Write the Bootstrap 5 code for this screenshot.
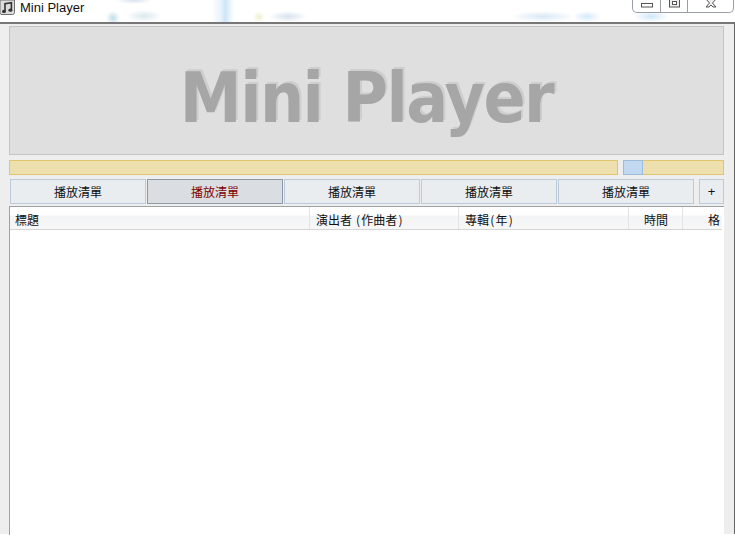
<!DOCTYPE html>
<html lang="zh-Hant">
<head>
<meta charset="utf-8">
<title>Mini Player</title>
<link href="https://cdn.jsdelivr.net/npm/bootstrap@5.3.0/dist/css/bootstrap.min.css" rel="stylesheet">
<style>
html,body{margin:0;height:555px;overflow:hidden;background:#fff}
body{font-family:"Noto Sans CJK TC","Liberation Sans",sans-serif;font-size:12px;color:#111}
.desk{height:22px;overflow:hidden;background-color:#fff;background-repeat:no-repeat;background-image:
 linear-gradient(90deg,#fff 0,#e6f3fc 40%,#cfe5f7 60%,#e6f3fc 80%,#fff 100%),
 radial-gradient(ellipse at center,#dce8ee 0,#fff 72%),
 radial-gradient(ellipse at center,#c3dde8 0,#fff 72%),
 radial-gradient(ellipse at center,#f1f0cf 0,#fff 72%),
 radial-gradient(ellipse at center,#d8e3ee 0,#fff 72%),
 radial-gradient(ellipse at center,#d8e8f6 0,#fff 72%),
 radial-gradient(ellipse at center,#d4e9fb 0,#fff 72%),
 radial-gradient(ellipse at center,#cfe6fb 0,#fff 72%),
 radial-gradient(ellipse at center,#d9e4ee 0,#fff 72%);
 background-size:22px 22px,36px 12px,14px 14px,12px 12px,38px 11px,64px 11px,28px 11px,34px 11px,36px 7px;
 background-position:212px 0,126px 10px,106px 11px,253px 11px,269px 11px,511px 11px,573px 11px,634px 11px,116px -3px}
.app-icon{width:15px;height:15px;flex:none}
.app-title{font-family:"Liberation Sans",sans-serif;font-size:13px;line-height:15px;margin-left:5px;color:#111}
.win-btns{border:1px solid #9a9fa6;border-top:0;border-radius:0 0 5px 5px;height:13px;width:102px;margin-right:1px;background:#fff;overflow:hidden}
.win-btn{height:100%;border-right:1px solid #9a9fa6}
.win-btn:last-child{border-right:0}
.wb1{width:28px}.wb2{width:27px}.wb3{flex:1}
.shell{height:512px;background:#eee;border-top:2px solid #777;border-right:1px solid #666;padding:2px 10px 0 9px;box-sizing:border-box}
.banner{height:129px;background:#dfdfdf;border:1px solid #c4c4c4;padding-top:16px}
.banner-text{font-family:"DejaVu Sans",sans-serif;font-stretch:condensed;font-weight:700;font-size:69px;line-height:1;color:#a6a6a6;text-shadow:2px -2px 0 #cecece;letter-spacing:-1.5px}
.seek{margin-top:5px;height:15px;gap:5px}
.track{background:#eddfae;border:1px solid #e0c46e}
.t1{width:609px}.t2{flex:1;position:relative}
.thumb{position:absolute;left:-1px;top:-1px;width:20px;height:15px;background:#c3d9f1;border:1px solid #9dbcdc}
.tabs{margin-top:4px;height:25px;padding-left:1px;gap:1px}
.tabb{width:136px;height:25px;padding:1px 0 0;border-radius:0;background:#e9edf0;border:1px solid #bccbda;font-size:12px;line-height:22px;color:#111;font-family:inherit;font-weight:400}
.tabb.on{background:#dadde1;border-color:#8e99a5;color:#800000}
.tabb.add{width:25px;margin-left:4px;font-family:"Liberation Sans",sans-serif;font-size:13px}
.pane{margin-top:2px;background:#fff;border-top:1px solid #a0a0a0;border-left:1px solid #a0a0a0;height:329px}
.heads{height:23px;background:linear-gradient(#fff 0,#fff 8px,#f3f4f5 9px,#f7f7f8 100%);border-bottom:1px solid #d5d5d5;margin-right:2px}
.hc{height:100%;line-height:25px;padding-left:5px;border-right:1px solid #e4e4e4;overflow:hidden;white-space:nowrap;font-size:12px;font-weight:400;color:#111}
.pr{padding:0 1.25px}
.h1{width:300px}.h2{width:149px;padding-left:6px}.h3{width:170px;padding-left:6px}.h4{width:54px;padding-left:15px}.h5{flex:1;border-right:0;padding-left:25px}
</style>
</head>
<body>
<div class="desk d-flex justify-content-between align-items-start">
  <div class="d-flex align-items-start">
    <svg class="app-icon" viewBox="0 0 15 15"><path d="M0 0H14.5V12.5Q14.5 14.5 12.5 14.5H2Q0 14.5 0 12.5Z" fill="#dcdcdc" stroke="#6f6f6f"/><path d="M5 11V3.6l6.4-1V9.8" fill="none" stroke="#333" stroke-width="1.6"/><ellipse cx="4" cy="11.4" rx="2" ry="1.6" fill="#333"/><ellipse cx="10.4" cy="10.2" rx="2" ry="1.6" fill="#333"/></svg>
    <div class="app-title">Mini Player</div>
  </div>
  <div class="win-btns d-flex">
    <div class="win-btn wb1 d-flex justify-content-center"><svg width="13" height="12" viewBox="0 0 13 12"><rect x="1.5" y="3.5" width="11" height="3.5" fill="#fff" stroke="#555"/></svg></div>
    <div class="win-btn wb2 d-flex justify-content-center"><svg width="13" height="12" viewBox="0 0 13 12"><rect x="1.5" y="-1.5" width="10" height="8.5" fill="#eee" stroke="#555"/><rect x="4.5" y="1.5" width="4" height="3" fill="#fff" stroke="#555"/></svg></div>
    <div class="win-btn wb3 d-flex justify-content-center"><svg width="14" height="12" viewBox="0 0 14 12"><path d="M2 -1L5.5 3L2 7H5L7 5L9 7H12L8.5 3L12 -1" fill="#eee" stroke="#555"/></svg></div>
  </div>
</div>
<div class="shell">
  <div class="banner d-flex align-items-center justify-content-center"><div class="banner-text">Mini Player</div></div>
  <div class="seek d-flex">
    <div class="track t1"></div>
    <div class="track t2"><div class="thumb"></div></div>
  </div>
  <div class="tabs d-flex">
    <button class="btn tabb" type="button">播放清單</button>
    <button class="btn tabb on" type="button">播放清單</button>
    <button class="btn tabb" type="button">播放清單</button>
    <button class="btn tabb" type="button">播放清單</button>
    <button class="btn tabb" type="button">播放清單</button>
    <button class="btn tabb add" type="button">+</button>
  </div>
  <div class="pane">
    <div class="heads d-flex">
      <div class="hc h1">標題</div>
      <div class="hc h2">演出者 <span class="pr">(</span>作曲者<span class="pr">)</span></div>
      <div class="hc h3">專輯<span class="pr">(</span>年<span class="pr">)</span></div>
      <div class="hc h4">時間</div>
      <div class="hc h5">格</div>
    </div>
  </div>
</div>
</body>
</html>
